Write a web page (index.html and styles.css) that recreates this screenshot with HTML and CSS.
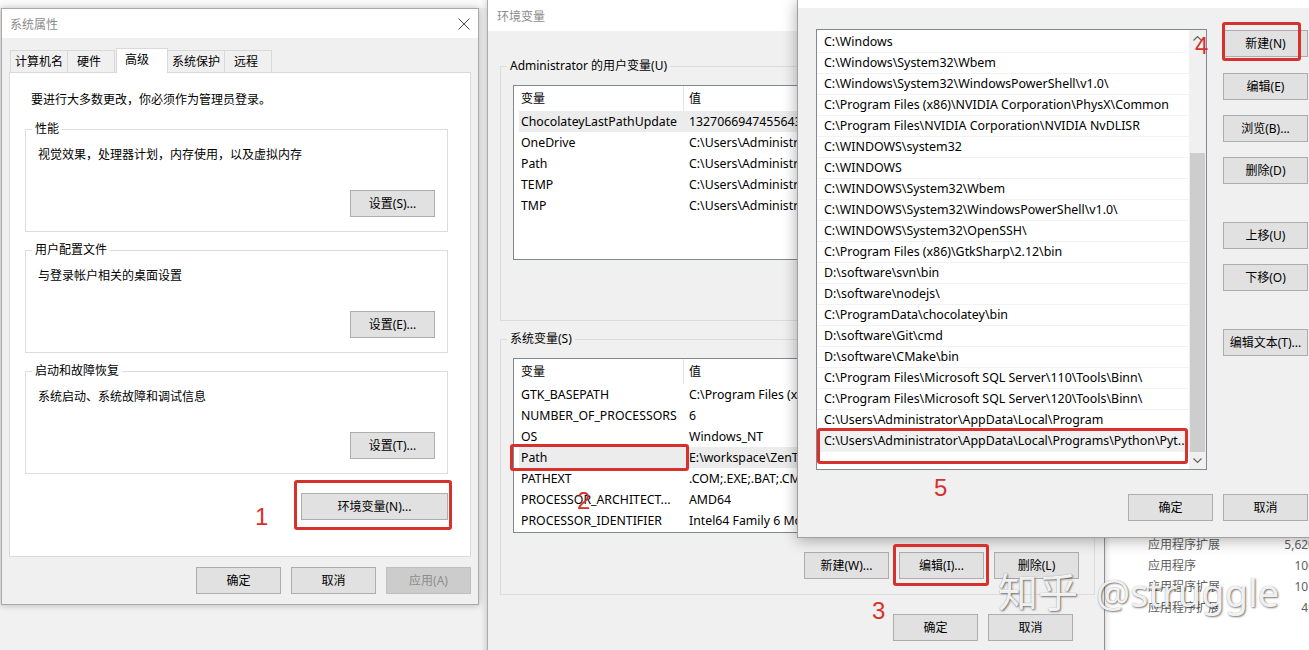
FILE: index.html
```html
<!DOCTYPE html>
<html lang="zh-CN">
<head>
<meta charset="utf-8">
<title>环境变量</title>
<link rel="stylesheet" href="styles.css">
</head>
<body>
<div class="desk">

  <div class="bgwin">
    <div class="bgrow"><span>应用程序扩展</span><span>5,620</span></div>
    <div class="bgrow"><span>应用程序</span><span>100</span></div>
    <div class="bgrow"><span>应用程序扩展</span><span>107</span></div>
    <div class="bgrow"><span>应用程序扩展</span><span>49</span></div>
  </div>

  <section class="win sysprops">
    <header class="tbar">
      <span>系统属性</span>
      <svg class="xicon" width="12" height="12" viewBox="0 0 12 12"><path d="M0.5 0.5L11.5 11.5M11.5 0.5L0.5 11.5" stroke="#4a4a4a" stroke-width="1" fill="none"/></svg>
    </header>
    <div class="sp-body">
      <div class="tabs">
        <div class="tab">计算机名</div>
        <div class="tab short">硬件</div>
        <div class="tab sel">高级</div>
        <div class="tab">系统保护</div>
        <div class="tab short">远程</div>
      </div>
      <div class="panel">
        <p class="intro">要进行大多数更改，你必须作为管理员登录。</p>
        <div class="grp sm first">
          <span class="glabel">性能</span>
          <p class="gdesc">视觉效果，处理器计划，内存使用，以及虚拟内存</p>
          <button class="btn gbtn">设置(S)...</button>
        </div>
        <div class="grp sm">
          <span class="glabel">用户配置文件</span>
          <p class="gdesc">与登录帐户相关的桌面设置</p>
          <button class="btn gbtn">设置(E)...</button>
        </div>
        <div class="grp sm">
          <span class="glabel">启动和故障恢复</span>
          <p class="gdesc">系统启动、系统故障和调试信息</p>
          <button class="btn gbtn">设置(T)...</button>
        </div>
        <button class="btn envbtn">环境变量(N)...</button>
      </div>
      <div class="foot sp-foot">
        <button class="btn">确定</button>
        <button class="btn">取消</button>
        <button class="btn dis">应用(A)</button>
      </div>
    </div>
  </section>

  <section class="win envvars">
    <header class="tbar"><span>环境变量</span></header>
    <div class="ev-body">
      <div class="grp lg">
        <span class="glabel">Administrator 的用户变量(U)</span>
        <div class="vlist">
          <div class="vrow head"><span class="c1">变量</span><span class="c2">值</span></div>
          <div class="vrow sel"><span class="c1">ChocolateyLastPathUpdate</span><span class="c2">132706694745564316</span></div>
          <div class="vrow"><span class="c1">OneDrive</span><span class="c2">C:\Users\Administrator\OneDrive</span></div>
          <div class="vrow"><span class="c1">Path</span><span class="c2">C:\Users\Administrator\AppData\Local\Microsoft\WindowsApps;</span></div>
          <div class="vrow"><span class="c1">TEMP</span><span class="c2">C:\Users\Administrator\AppData\Local\Temp</span></div>
          <div class="vrow"><span class="c1">TMP</span><span class="c2">C:\Users\Administrator\AppData\Local\Temp</span></div>
        </div>
        <div class="gbtns">
          <button class="btn">新建(N)...</button>
          <button class="btn">编辑(E)...</button>
          <button class="btn">删除(D)</button>
        </div>
      </div>
      <div class="grp lg second">
        <span class="glabel">系统变量(S)</span>
        <div class="vlist">
          <div class="vrow head"><span class="c1">变量</span><span class="c2">值</span></div>
          <div class="vrow"><span class="c1">GTK_BASEPATH</span><span class="c2">C:\Program Files (x86)\GtkSharp\2.12\</span></div>
          <div class="vrow"><span class="c1">NUMBER_OF_PROCESSORS</span><span class="c2">6</span></div>
          <div class="vrow"><span class="c1">OS</span><span class="c2">Windows_NT</span></div>
          <div class="vrow sel"><span class="c1">Path</span><span class="c2">E:\workspace\ZenTao\bin;C:\Windows</span></div>
          <div class="vrow"><span class="c1">PATHEXT</span><span class="c2">.COM;.EXE;.BAT;.CMD;.VBS;.VBE;.JS</span></div>
          <div class="vrow"><span class="c1">PROCESSOR_ARCHITECT...</span><span class="c2">AMD64</span></div>
          <div class="vrow"><span class="c1">PROCESSOR_IDENTIFIER</span><span class="c2">Intel64 Family 6 Model 158</span></div>
        </div>
        <div class="gbtns">
          <button class="btn">新建(W)...</button>
          <button class="btn">编辑(I)...</button>
          <button class="btn">删除(L)</button>
        </div>
      </div>
      <div class="foot ev-foot">
        <button class="btn">确定</button>
        <button class="btn">取消</button>
      </div>
    </div>
  </section>

  <section class="win editpath">
    <div class="tstrip"></div>
    <div class="ep-body">
      <div class="plist">
        <div class="prows">
          <div class="prow">C:\Windows</div>
          <div class="prow">C:\Windows\System32\Wbem</div>
          <div class="prow">C:\Windows\System32\WindowsPowerShell\v1.0\</div>
          <div class="prow">C:\Program Files (x86)\NVIDIA Corporation\PhysX\Common</div>
          <div class="prow">C:\Program Files\NVIDIA Corporation\NVIDIA NvDLISR</div>
          <div class="prow">C:\WINDOWS\system32</div>
          <div class="prow">C:\WINDOWS</div>
          <div class="prow">C:\WINDOWS\System32\Wbem</div>
          <div class="prow">C:\WINDOWS\System32\WindowsPowerShell\v1.0\</div>
          <div class="prow">C:\WINDOWS\System32\OpenSSH\</div>
          <div class="prow">C:\Program Files (x86)\GtkSharp\2.12\bin</div>
          <div class="prow">D:\software\svn\bin</div>
          <div class="prow">D:\software\nodejs\</div>
          <div class="prow">C:\ProgramData\chocolatey\bin</div>
          <div class="prow">D:\software\Git\cmd</div>
          <div class="prow">D:\software\CMake\bin</div>
          <div class="prow">C:\Program Files\Microsoft SQL Server\110\Tools\Binn\</div>
          <div class="prow">C:\Program Files\Microsoft SQL Server\120\Tools\Binn\</div>
          <div class="prow">C:\Users\Administrator\AppData\Local\Program</div>
          <div class="prow sel">C:\Users\Administrator\AppData\Local\Programs\Python\Pyt...</div>
          <div class="prow"></div>
        </div>
        <div class="sbar">
          <div class="sbtn"><svg width="9" height="5" viewBox="0 0 9 5"><path d="M0.5 4.5L4.5 0.5L8.5 4.5" fill="none" stroke="#606060" stroke-width="1.1"/></svg></div>
          <div class="strack"><div class="thumb"></div></div>
          <div class="sbtn"><svg width="9" height="5" viewBox="0 0 9 5"><path d="M0.5 0.5L4.5 4.5L8.5 0.5" fill="none" stroke="#606060" stroke-width="1.1"/></svg></div>
        </div>
      </div>
      <div class="pbtns">
        <button class="btn">新建(N)</button>
        <button class="btn">编辑(E)</button>
        <button class="btn">浏览(B)...</button>
        <button class="btn">删除(D)</button>
        <button class="btn grpgap">上移(U)</button>
        <button class="btn">下移(O)</button>
        <button class="btn grpgap">编辑文本(T)...</button>
      </div>
      <div class="foot ep-foot">
        <button class="btn">确定</button>
        <button class="btn">取消</button>
      </div>
    </div>
  </section>

  <div class="mark m1"></div>
  <div class="mark m2"></div>
  <div class="mark m3"></div>
  <div class="mark m4"></div>
  <div class="mark m5"></div>
  <span class="num n1">1</span>
  <span class="num n2">2</span>
  <span class="num n3">3</span>
  <span class="num n4">4</span>
  <span class="num n5">5</span>

  <div class="wm"><span class="wm-a">知乎</span><span class="wm-b">@struggle</span></div>
</div>
</body>
</html>
```

FILE: styles.css
```css
* { box-sizing: border-box; }
html, body { margin: 0; padding: 0; }
body {
  width: 1309px;
  height: 650px;
  overflow: hidden;
  font-family: "Noto Sans", "Noto Sans CJK SC", sans-serif;
  font-size: 12px;
  color: #000;
}
p { margin: 0; }

.desk {
  position: relative;
  width: 1309px;
  height: 650px;
  overflow: hidden;
  background: linear-gradient(#fbfbfb 0 8px, #f1f1f1 8px);
}

/* generic button */
.btn {
  display: block;
  flex: none;
  width: 85px;
  height: 27px;
  padding: 0;
  border: 1px solid #adadad;
  background: #e1e1e1;
  font: inherit;
  color: #000;
  line-height: 25px;
  text-align: center;
  white-space: nowrap;
}
.btn.dis { background: #cccccc; border-color: #bfbfbf; color: #8d8d8d; }

.win { position: absolute; background: #f0f0f0; }
.tbar {
  background: #fff;
  color: #8c8c8c;
  display: flex;
  align-items: center;
  justify-content: space-between;
}
.foot { display: flex; justify-content: flex-end; gap: 10px; }

/* group boxes */
.grp { position: relative; border: 1px solid #dcdcdc; display: flex; flex-direction: column; }
.glabel {
  position: absolute;
  top: -9px;
  left: 6px;
  padding: 0 3px;
  line-height: 16px;
  background: #fff;
  white-space: nowrap;
}

/* ---------- window 1: 系统属性 ---------- */
.sysprops {
  left: 1px;
  top: 8px;
  width: 478px;
  height: 597px;
  border: 1px solid #a9a9a9;
  box-shadow: 0 0 7px rgba(0,0,0,.25);
}
.sysprops .tbar { height: 29px; padding: 0 8px; }
.xicon { display: block; }
.sp-body { padding: 10px 7px 0; }
.tabs {
  display: flex;
  align-items: flex-end;
  height: 24px;
  padding-left: 1px;
  position: relative;
  z-index: 1;
}
.tab {
  height: 22px;
  line-height: 21px;
  padding: 0 4px;
  border: 1px solid #d9d9d9;
  border-bottom: 0;
  background: #f0f0f0;
  margin-right: -1px;
  white-space: nowrap;
}
.tab.short { padding: 0 11px 0 9px; width: 48px; }
.tab.sel {
  width: 52px;
  height: 25px;
  margin-bottom: -1px;
  margin-left: 2px;
  padding: 0 0 0 8px;
  background: #fff;
  line-height: 22px;
}
.panel {
  height: 485px;
  border: 1px solid #d9d9d9;
  background: #fff;
  padding: 0 22px 0 15px;
  display: flex;
  flex-direction: column;
}
.intro { margin: 19px 0 0 6px; line-height: 16px; }
.grp.sm { height: 103px; padding: 17px 12px 14px; margin-top: 18px; }
.grp.sm.first { margin-top: 21px; }
.gdesc { line-height: 16px; }
.gbtn { margin-top: auto; align-self: flex-end; }
.envbtn { width: 147px; margin-top: 19px; align-self: flex-end; }
.sp-foot { margin-top: 10px; }

/* ---------- window 2: 环境变量 ---------- */
.envvars {
  left: 487px;
  top: 0;
  width: 618px;
  height: 680px;
  border-left: 1px solid #ababab;
  border-right: 1px solid #8f8f8f;
  box-shadow: 0 0 7px rgba(0,0,0,.22);
}
.envvars .tbar { height: 31px; padding-left: 9px; }
.ev-body { padding: 35px 9px 0 12px; }
.ev-body .glabel { background: #f0f0f0; }
.grp.lg { height: 255px; padding: 18px 12px 0; }
.grp.lg.second { height: 256px; margin-top: 18px; }
.vlist {
  height: 175px;
  border: 1px solid #828790;
  background: #fff;
  padding-left: 5px;
  overflow: hidden;
}
.vrow { display: flex; height: 21px; line-height: 21px; white-space: nowrap; font-size: 12.3px; }
.vrow.head { height: 25px; line-height: 25px; font-size: 12px; }
.vrow.sel { background: #ececec; }
.c1 { width: 164px; flex: none; padding-left: 2px; overflow: hidden; }
.c2 { padding-left: 6px; }
.head .c2 { border-left: 1px solid #e5e5e5; padding-left: 5px; }
.gbtns { display: flex; justify-content: flex-end; gap: 10px; margin-top: 19px; padding-right: 3px; }
.ev-foot { margin-top: 19px; padding-right: 22px; }

/* ---------- window 3: 编辑环境变量 ---------- */
.editpath {
  left: 797px;
  top: 0;
  width: 530px;
  height: 538px;
  border-left: 1px solid #a0a0a0;
  border-bottom: 1px solid #a0a0a0;
  box-shadow: 0 2px 14px rgba(0,0,0,.33);
}
.tstrip { height: 8px; background: #fff; }
.ep-body {
  display: grid;
  grid-template-columns: 391px 85px;
  column-gap: 16px;
  padding: 21px 0 0 18px;
}
.plist {
  height: 441px;
  border: 1px solid #828790;
  background: #fff;
  display: flex;
}
.prows { flex: 1; min-width: 0; padding-top: 2px; overflow: hidden; }
.prow {
  height: 21px;
  line-height: 20px;
  padding-left: 7px;
  border-bottom: 1px solid #f2f2f2;
  white-space: nowrap;
  overflow: hidden;
  font-size: 12.4px;
}
.prow.sel { background: #f0f0f0; }
.sbar { width: 17px; flex: none; background: #f0f0f0; display: flex; flex-direction: column; }
.sbtn { height: 17px; display: flex; align-items: center; justify-content: center; }
.sbtn svg { display: block; }
.strack { flex: 1; padding-top: 106px; }
.thumb { height: 299px; margin: 0 1px; background: #cdcdcd; }
.pbtns { display: flex; flex-direction: column; gap: 15px; padding-top: 1px; }
.pbtns .btn:nth-child(2) { margin-top: 1px; }
.pbtns .grpgap { margin-top: 23px; }
.ep-foot { grid-column: 1 / -1; margin-top: 24px; }

/* background window */
.bgwin {
  position: absolute;
  left: 1104px;
  top: 534px;
  width: 211px;
  height: 130px;
  background: #fff;
  color: #5e5e5e;
  padding-left: 44px;
}
.bgrow { display: flex; justify-content: space-between; height: 21px; line-height: 21px; }

/* annotations */
.mark { position: absolute; border: 3px solid #d7312d; border-radius: 3px; }
.m1 { left: 294px; top: 480px; width: 158px; height: 50px; }
.m2 { left: 510px; top: 444px; width: 179px; height: 27px; }
.m3 { left: 893px; top: 544px; width: 96px; height: 42px; }
.m4 { left: 1222px; top: 22px; width: 79px; height: 39px; }
.m5 { left: 817px; top: 428px; width: 371px; height: 36px; }
.num {
  position: absolute;
  color: #d7312d;
  font-family: "Liberation Sans", sans-serif;
  font-size: 24px;
  line-height: 24px;
}
.n1 { left: 255px; top: 505px; }
.n2 { left: 577px; top: 489px; }
.n3 { left: 872px; top: 599px; }
.n4 { left: 1195px; top: 34px; }
.n5 { left: 934px; top: 476px; }

/* watermark */
.wm {
  position: absolute;
  left: 998px;
  top: 566px;
  line-height: 48px;
  white-space: nowrap;
  color: rgba(255,255,255,.93);
  text-shadow: 1px 1px 2px rgba(0,0,0,.5), 0 0 1px rgba(0,0,0,.35);
}
.wm-a { font-family: "Noto Sans CJK SC", sans-serif; font-size: 40px; }
.wm-b { font-family: "Noto Sans", sans-serif; font-size: 38px; margin-left: 18px; }
```
